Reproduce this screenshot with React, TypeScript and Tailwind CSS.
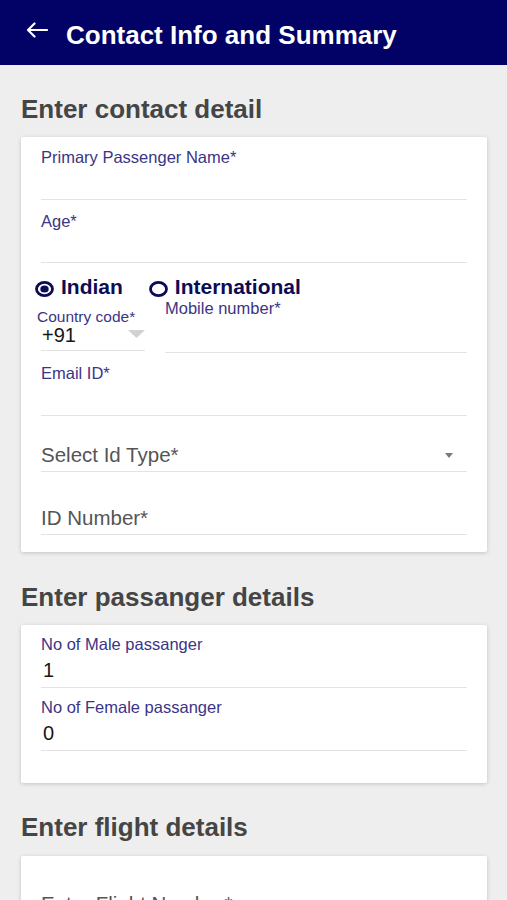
const Label = ({ children }: { children: React.ReactNode }) => (
  <p className="text-[16.5px] leading-[18px] text-[#3b3585]">{children}</p>
);

const Radio = ({ checked }: { checked?: boolean }) => (
  <svg width="19" height="16" viewBox="0 0 19 16" className="mt-[4px]">
    <ellipse cx="9.5" cy="8" rx="8" ry="6.6" fill="none" stroke="#0c0c55" strokeWidth="2.8" />
    {checked && <ellipse cx="9.5" cy="8" rx="4.2" ry="3.5" fill="#0c0c55" />}
  </svg>
);

const App = () => {
  return (
    <div className="h-[900px] overflow-hidden bg-[#eeeeee] font-[Liberation_Sans,Arial,sans-serif]">
      <div className="h-[65px] bg-[#020266] flex items-start pl-[26px]">
        <svg width="22" height="16" viewBox="0 0 22 16" className="mt-[22px]">
          <path d="M21 8H2M8.5 1.5L2 8l6.5 6.5" fill="none" stroke="white" strokeWidth="2.2" strokeLinecap="round" strokeLinejoin="round" />
        </svg>
        <h1 className="ml-[18px] mt-[20px] text-[26px] leading-[30px] font-bold text-white">
          Contact Info and Summary
        </h1>
      </div>

      <div className="pl-[21px] pr-[20px] pt-[30px]">
        <h2 className="text-[26px] leading-[28px] font-bold text-[#454545]">Enter contact detail</h2>
        <div className="mt-[14px] bg-white rounded-[2px] shadow-[0_1px_4px_rgba(0,0,0,0.18)] px-5 pt-[11px] pb-[17px]">
          <div>
            <Label>Primary Passenger Name*</Label>
            <div className="h-[34px] border-b border-[#e3e3e3]" />
          </div>
          <div className="mt-[12px]">
            <Label>Age*</Label>
            <div className="h-[33px] border-b border-[#e3e3e3]" />
          </div>

          <div className="mt-[12px] h-[24px] flex items-center -ml-[6px] text-[21px] leading-[24px] font-bold text-[#0c0c55]">
            <Radio checked />
            <span className="ml-[7px]">Indian</span>
            <span className="ml-[26px] flex items-center">
              <Radio />
              <span className="ml-[7px]">International</span>
            </span>
          </div>

          <div className="flex items-start">
            <div className="w-[104px] pt-[10px]">
              <p className="-ml-[4px] text-[15.5px] leading-[16px] text-[#3b3585]">Country code*</p>
              <div className="h-[20px] flex items-start justify-between">
                <span className="ml-[1px] text-[20px] leading-[20px] text-[#161616]">+91</span>
                <svg width="17" height="8" viewBox="0 0 17 8" className="mt-[5px]">
                  <path d="M0 0h17L8.5 8z" fill="#d2d2d2" />
                </svg>
              </div>
              <div className="h-[6px] border-b border-[#e3e3e3]" />
            </div>
            <div className="flex-1 ml-[20px]">
              <Label>Mobile number*</Label>
              <div className="h-[36px] border-b border-[#e3e3e3]" />
            </div>
          </div>

          <div className="mt-[11px]">
            <Label>Email ID*</Label>
            <div className="h-[34px] border-b border-[#e3e3e3]" />
          </div>

          <div className="mt-[27px] pb-[4px] border-b border-[#e3e3e3] flex items-center justify-between">
            <p className="text-[20.5px] leading-[24px] text-[#555555]">Select Id Type*</p>
            <svg width="8" height="5" viewBox="0 0 8 5" className="mr-[14px]">
              <path d="M0 0h8L4 5z" fill="#7a7a7a" />
            </svg>
          </div>

          <p className="mt-[34px] pb-[4px] border-b border-[#e3e3e3] text-[20.5px] leading-[24px] text-[#555555]">
            ID Number*
          </p>
        </div>

        <h2 className="mt-[31px] text-[26px] leading-[28px] font-bold text-[#454545]">Enter passanger details</h2>
        <div className="mt-[14px] bg-white rounded-[2px] shadow-[0_1px_4px_rgba(0,0,0,0.18)] px-5 pt-[10px] pb-[32px]">
          <div>
            <Label>No of Male passanger</Label>
            <p className="mt-[5px] pb-[5px] border-b border-[#e3e3e3] pl-[2px] text-[20px] leading-[24px] text-[#161616]">1</p>
          </div>
          <div className="mt-[10px]">
            <Label>No of Female passanger</Label>
            <p className="mt-[5px] pb-[5px] border-b border-[#e3e3e3] pl-[2px] text-[20px] leading-[24px] text-[#161616]">0</p>
          </div>
        </div>

        <h2 className="mt-[30px] text-[26px] leading-[28px] font-bold text-[#454545]">Enter flight details</h2>
        <div className="mt-[15px] bg-white rounded-[2px] shadow-[0_1px_4px_rgba(0,0,0,0.18)] px-5 pt-[36px] pb-[17px]">
          <p className="pb-[4px] border-b border-[#e3e3e3] text-[20.5px] leading-[24px] text-[#555555]">
            Enter Flight Number*
          </p>
          <p className="mt-[34px] pb-[4px] border-b border-[#e3e3e3] text-[20.5px] leading-[24px] text-[#555555]">
            Flight Date*
          </p>
        </div>
      </div>
    </div>
  );
};

export default App;
